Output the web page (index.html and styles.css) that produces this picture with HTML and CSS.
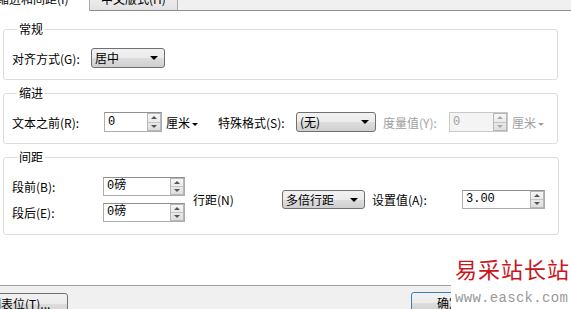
FILE: index.html
```html
<!doctype html>
<html>

<head>
    <title>段落</title>
    <link rel="stylesheet" href="styles.css">
</head>

<body>
    <div class="tabs">
        <div class="tab active">缩进和间距(I)</div>
        <div class="tab">中文版式(H)</div>
        <div class="tab_rest"></div>
    </div>

    <div class="panel">
        <fieldset class="group g1">
            <legend>常规</legend>
            <div class="row">
                <span class="lbl w79">对齐方式(G):</span>
                <span class="select w74">居中<i class="arrow"></i></span>
            </div>
        </fieldset>

        <fieldset class="group g2">
            <legend>缩进</legend>
            <div class="row">
                <span class="lbl w92">文本之前(R):</span>
                <span class="field w58">0<span class="spin"><i class="up"></i><i class="down"></i></span></span>
                <span class="unit">厘米<i class="small_arrow"></i></span>
                <span class="lbl w78">特殊格式(S):</span>
                <span class="select w80">(无)<i class="arrow"></i></span>
                <span class="lbl w66 off">度量值(Y):</span>
                <span class="field w59 off">0<span class="spin"><i class="up"></i><i class="down"></i></span></span>
                <span class="unit off">厘米<i class="small_arrow"></i></span>
            </div>
        </fieldset>

        <fieldset class="group g3">
            <legend>间距</legend>
            <div class="row">
                <div class="col">
                    <div class="row">
                        <span class="lbl w91">段前(B):</span>
                        <span class="field w82 h19">0磅<span class="spin"><i class="up"></i><i class="down"></i></span></span>
                    </div>
                    <div class="row">
                        <span class="lbl w91">段后(E):</span>
                        <span class="field w82 h19">0磅<span class="spin"><i class="up"></i><i class="down"></i></span></span>
                    </div>
                </div>
                <span class="lbl w89 ml8">行距(N)</span>
                <span class="select w83 h19">多倍行距<i class="arrow"></i></span>
                <span class="lbl w90 ml7">设置值(A):</span>
                <span class="field w83 h19">3.00<span class="spin"><i class="up"></i><i class="down"></i></span></span>
            </div>
        </fieldset>
    </div>

    <div class="footer">
        <div class="btn tabstop">制表位(T)...</div>
        <div class="btn ok">确定</div>
    </div>

    <div class="mark">
        <div class="mark_cn">易采站长站</div>
        <div class="mark_en">www.easck.com</div>
    </div>
</body>

</html>
```

FILE: styles.css
```css
body {
    margin: 0;
    width: 571px;
    height: 309px;
    overflow: hidden;
    background: #fff;
    color: #000;
    font-family: "Noto Sans CJK SC", "Liberation Sans", sans-serif;
    font-size: 12px;
    position: relative;
}

.tabs {
    display: flex;
    height: 11px;
    overflow: hidden;
    align-items: flex-end;
}

.tab {
    height: 20px;
    line-height: 16px;
    box-sizing: border-box;
    white-space: nowrap;
}

.tab.active {
    width: 89px;
    text-indent: -3px;
    background: #fff;
}

.tab + .tab {
    width: 89px;
    padding-left: 11px;
    border: 1px solid #a9a9a9;
    border-bottom: 1px solid #898c95;
    background: linear-gradient(#f2f2f2, #e3e3e3);
    height: 21px;
}

.tab_rest {
    flex: 1;
    height: 11px;
    background: #f0f0f0;
    border-bottom: 1px solid #8e8f8f;
    box-sizing: border-box;
}

.panel {
    height: 274px;
    padding-top: 11px;
    box-sizing: border-box;
}

.group {
    margin: 0 13px 6px 3px;
    padding: 0 8px;
    border: 1px solid #dcdcdc;
    border-radius: 3px;
    min-width: 0;
}

.group legend {
    margin-left: 5px;
    padding: 0 2px;
    line-height: 14px;
}

.g1,
.g2 {
    padding-top: 12px;
    padding-bottom: 11px;
}

.g3 {
    padding-top: 13px;
    padding-bottom: 12px;
    margin-right: 12px;
}

.row {
    display: flex;
    align-items: center;
}

.col {
    display: flex;
    flex-direction: column;
    gap: 7px;
}

.lbl {
    white-space: nowrap;
}

.off {
    color: #a0a0a0;
}

.w58 { width: 58px; }
.w59 { width: 59px; }
.w66 { width: 66px; }
.w74 { width: 74px; }
.w78 { width: 78px; }
.w79 { width: 79px; }
.w80 { width: 80px; }
.w82 { width: 82px; }
.w83 { width: 83px; }
.w89 { width: 89px; }
.w90 { width: 90px; }
.w91 { width: 91px; }
.w92 { width: 92px; }
.ml7 { margin-left: 7px; }
.ml8 { margin-left: 8px; }

.select {
    position: relative;
    height: 20px;
    line-height: 18px;
    box-sizing: border-box;
    padding-left: 3px;
    border: 1px solid #707070;
    border-radius: 3px;
    background: linear-gradient(#f2f2f2 0%, #ebebeb 50%, #dddddd 51%, #cfcfcf 100%);
    white-space: nowrap;
}

.select + .lbl {
    margin-left: 7px;
}

.arrow {
    position: absolute;
    right: 6px;
    top: 7px;
    border-left: 4px solid transparent;
    border-right: 4px solid transparent;
    border-top: 4px solid #000;
}

.field {
    position: relative;
    height: 20px;
    line-height: 18px;
    box-sizing: border-box;
    padding-left: 3px;
    border: 1px solid #abadb3;
    border-top-color: #8e8f8f;
    background: #fff;
    font-family: "Liberation Mono", "Noto Sans CJK SC", monospace;
}

.field.off {
    border-color: #c9c9c9;
    background: #f4f4f4;
}

.h19 {
    height: 19px;
    line-height: 17px;
}

.spin {
    position: absolute;
    right: 0;
    top: 0;
    bottom: 0;
    width: 14px;
    box-sizing: border-box;
    border: 1px solid #b8b8b8;
    background: linear-gradient(#f6f6f6, #dedede);
    display: flex;
    flex-direction: column;
}

.spin i {
    flex: 1;
    position: relative;
}

.spin .up {
    border-bottom: 1px solid #c4c4c4;
}

.spin i::after {
    content: "";
    position: absolute;
    left: 3px;
    top: 2px;
    border-left: 3px solid transparent;
    border-right: 3px solid transparent;
}

.spin .up::after {
    border-bottom: 3px solid #555;
}

.spin .down::after {
    border-top: 3px solid #555;
}

.off .spin i::after {
    border-top-color: #aaa;
    border-bottom-color: #aaa;
}

.unit {
    margin-left: 4px;
    width: 52px;
    white-space: nowrap;
}

.unit.off {
    width: auto;
}

.small_arrow {
    display: inline-block;
    margin-left: 2px;
    vertical-align: middle;
    border-left: 3px solid transparent;
    border-right: 3px solid transparent;
    border-top: 3px solid #000;
}

.off .small_arrow {
    border-top-color: #a0a0a0;
}

.footer {
    height: 35px;
    border-top: 1px solid #a0a0a0;
    background: #f0f0f0;
    display: flex;
    align-items: flex-start;
    padding-top: 7px;
    box-sizing: border-box;
}

.btn {
    height: 22px;
    line-height: 20px;
    box-sizing: border-box;
    border: 1px solid #707070;
    border-radius: 3px;
    background: linear-gradient(#f2f2f2 0%, #ebebeb 50%, #dddddd 51%, #cfcfcf 100%);
    white-space: nowrap;
}

.tabstop {
    margin-left: -16px;
    width: 84px;
    padding-left: 4px;
}

.ok {
    margin-left: 343px;
    margin-top: -1px;
    width: 75px;
    padding-left: 25px;
    border-color: #3c7fb1;
}

.mark {
    position: absolute;
    left: 451px;
    top: 250px;
    bottom: 0;
    width: 120px;
    padding-left: 4px;
    box-sizing: border-box;
    background: #fff;
}

.mark_cn {
    margin-top: 4px;
    color: #c8161d;
    font-size: 22px;
    line-height: 28px;
    letter-spacing: 1px;
    white-space: nowrap;
}

.mark_en {
    margin-top: 9px;
    color: #9a9a9a;
    font-family: "Liberation Mono", monospace;
    font-size: 14px;
    line-height: 14px;
    letter-spacing: 0.3px;
    white-space: nowrap;
}
```
